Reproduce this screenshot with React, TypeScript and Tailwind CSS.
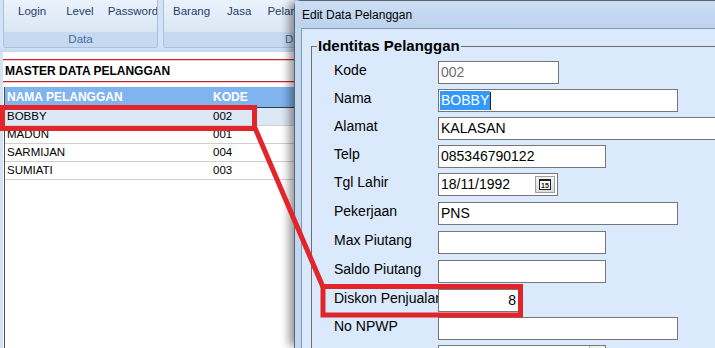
import React from 'react'

const RibbonGroup = ({
  label,
  children,
  className,
  labelClass,
}: {
  label: string
  children: React.ReactNode
  className?: string
  labelClass?: string
}) => (
  <div className={`flex flex-col h-[48px] shrink-0 border border-t-0 border-[#a9c1de] rounded-b-[3px] overflow-hidden ${className ?? ''}`}>
    <div className="flex-1 flex items-start pt-[5px] bg-gradient-to-b from-[#eaf2fb] to-[#dbe7f5] text-[11.5px] leading-[13px] text-[#1f3d6b] whitespace-nowrap">
      {children}
    </div>
    <div className={`h-[15px] bg-[#c7d9ef] text-[11.5px] leading-[15px] text-[#4a6c9f] whitespace-nowrap ${labelClass ?? ''}`}>{label}</div>
  </div>
)

const customers = [
  { name: 'BOBBY', kode: '002', active: true },
  { name: 'MADUN', kode: '001' },
  { name: 'SARMIJAN', kode: '004' },
  { name: 'SUMIATI', kode: '003' },
]

const RedRule = () => (
  <div>
    <div className="h-px bg-[#c8232c]" />
    <div className="h-px bg-[#f2c9cb]" />
  </div>
)

// --- left window (behind the dialog) ---
const MasterWindow = () => (
  <div className="w-[294px] shrink-0 flex flex-col bg-[#d3e2f4] overflow-hidden">
    <div className="flex h-[49px]">
      <RibbonGroup label="Data" className="ml-[3px] w-[155px]" labelClass="text-center">
        <span className="ml-[14px]">Login</span>
        <span className="ml-[20px]">Level</span>
        <span className="ml-[14px]">Password</span>
      </RibbonGroup>
      <RibbonGroup label="Data Master" className="ml-[5px] w-[220px]" labelClass="pl-[121px]">
        <span className="ml-[9px]">Barang</span>
        <span className="ml-[17px]">Jasa</span>
        <span className="ml-[16px]">Pelanggan</span>
      </RibbonGroup>
    </div>
    <div className="h-[3px] bg-[#c9dbf1]" />
    <div className="flex-1 ml-[3px] bg-white flex flex-col">
      <div className="mt-[7px]"><RedRule /></div>
      <div className="h-[20px] pl-[2px] flex items-center text-[12px] font-bold text-black">MASTER DATA PELANGGAN</div>
      <RedRule />
      <div className="mt-[4px] ml-[1px] flex-1 border-l border-[#4d4d4d] flex flex-col">
        <div className="h-[21px] bg-[#7fb4ef] border-b border-[#3a3a3a] flex items-center text-[12px] font-bold text-white">
          <span className="w-[208px] pl-[2px]">NAMA PELANGGAN</span>
          <span>KODE</span>
        </div>
        {customers.map((c) => (
          <div
            key={c.kode}
            className={`h-[18px] border-b border-[#cfcfcf] flex items-center text-[11.5px] text-black ${c.active ? 'bg-[#dde8f6]' : 'bg-white'}`}
          >
            <span className="w-[208px] pl-[2px]">{c.name}</span>
            <span>{c.kode}</span>
          </div>
        ))}
      </div>
    </div>
  </div>
)

const FieldRow = ({ label, h, children }: { label: string; h: string; children: React.ReactNode }) => (
  <div className={`flex items-start ${h}`}>
    <div className="w-[104px] shrink-0 whitespace-nowrap text-[14px] leading-[17px] pt-[1px] text-black">{label}</div>
    {children}
  </div>
)

const Box = ({ w, children, className }: { w: string; children?: React.ReactNode; className?: string }) => (
  <div className={`relative shrink-0 h-[23px] bg-white border border-[#767676] flex items-center px-[1px] text-[14px] text-black whitespace-nowrap ${w} ${className ?? ''}`}>
    {children}
  </div>
)

const CalendarButton = () => (
  <div className="w-[20px] h-[17px] bg-gradient-to-b from-[#f4f4f4] to-[#dcdcdc] border border-[#a0a0a0] flex items-center justify-center">
    <div className="w-[12px] h-[11px] border border-[#222] border-t-2 bg-white flex items-center justify-center text-[7px] font-bold leading-none text-[#222]">
      15
    </div>
  </div>
)

// --- dialog ---
const EditDialog = () => (
  <div className="relative z-10 flex-1 min-w-0 flex flex-col bg-[#c2d8ef] border-l border-t border-[#5a6472] rounded-tl-[7px] shadow-[-7px_0_9px_-2px_rgba(0,0,0,0.4)]">
    <div className="h-[27px] shrink-0 flex items-center pl-[7px] text-[12px] text-black bg-gradient-to-b from-[#cbdef3] to-[#bcd3ec]">
      Edit Data Pelanggan
    </div>
    <div className="flex-1 ml-[6px] border-l border-t border-[#8397b0] bg-[#dae9fb] overflow-hidden">
      <fieldset className="mt-[8px] ml-[9px] w-[520px] border border-[#6f6f6f] pl-[5px]">
        <legend className="px-[1px] text-[15px] leading-[18px] font-bold text-black">Identitas Pelanggan</legend>
        <div className="pl-[17px] pt-[6px]">
          <FieldRow label="Kode" h="h-[28px]">
            <Box w="w-[121px]"><span className="text-[#6d6d6d] pl-[1px]">002</span></Box>
          </FieldRow>
          <FieldRow label="Nama" h="h-[28px]">
            <Box w="w-[240px]">
              <span className="bg-[#3399ff] text-white leading-[19px] px-[1px]">BOBBY</span>
              <span className="w-px h-[18px] bg-[#222]" />
            </Box>
          </FieldRow>
          <FieldRow label="Alamat" h="h-[28px]">
            <Box w="w-[320px]"><span className="pl-[1px]">KALASAN</span></Box>
          </FieldRow>
          <FieldRow label="Telp" h="h-[28px]">
            <Box w="w-[168px]"><span className="pl-[1px]">085346790122</span></Box>
          </FieldRow>
          <FieldRow label="Tgl Lahir" h="h-[29px]">
            <Box w="w-[120px]" className="h-[21px] justify-between pr-[2px]">
              <span className="pl-[1px]">18/11/1992</span>
              <CalendarButton />
            </Box>
          </FieldRow>
          <FieldRow label="Pekerjaan" h="h-[29px]">
            <Box w="w-[240px]"><span className="pl-[1px]">PNS</span></Box>
          </FieldRow>
          <FieldRow label="Max Piutang" h="h-[29px]">
            <Box w="w-[168px]" />
          </FieldRow>
          <FieldRow label="Saldo Piutang" h="h-[29px]">
            <Box w="w-[168px]" />
          </FieldRow>
          <FieldRow label="Diskon Penjualan" h="h-[28px]">
            <Box w="w-[83px]" className="justify-end pr-[4px]">8</Box>
          </FieldRow>
          <FieldRow label="No NPWP" h="h-[28px]">
            <Box w="w-[240px]" />
          </FieldRow>
          <FieldRow label="" h="h-[28px]">
            <Box w="w-[168px]" className="justify-end pr-0">
              <div className="w-[16px] h-full border-l border-[#b5b5b5] bg-[#f1f1f1]" />
            </Box>
          </FieldRow>
        </div>
      </fieldset>
    </div>
  </div>
)

export default function App() {
  return (
    <div className="relative w-[715px] h-[348px] overflow-hidden flex bg-[#d3e2f4] font-['Liberation_Sans',Arial,sans-serif]">
      <MasterWindow />
      <EditDialog />
      {/* annotation drawn on top of the screenshot */}
      <svg className="absolute inset-0 z-20 pointer-events-none" width="715" height="348" viewBox="0 0 715 348">
        <g fill="none" stroke="#e2242b" strokeWidth="5">
          <rect x="2.5" y="107.5" width="252" height="21" />
          <rect x="323" y="286.5" width="197.5" height="28.5" />
          <line x1="255" y1="128" x2="323" y2="287" />
        </g>
      </svg>
    </div>
  )
}
